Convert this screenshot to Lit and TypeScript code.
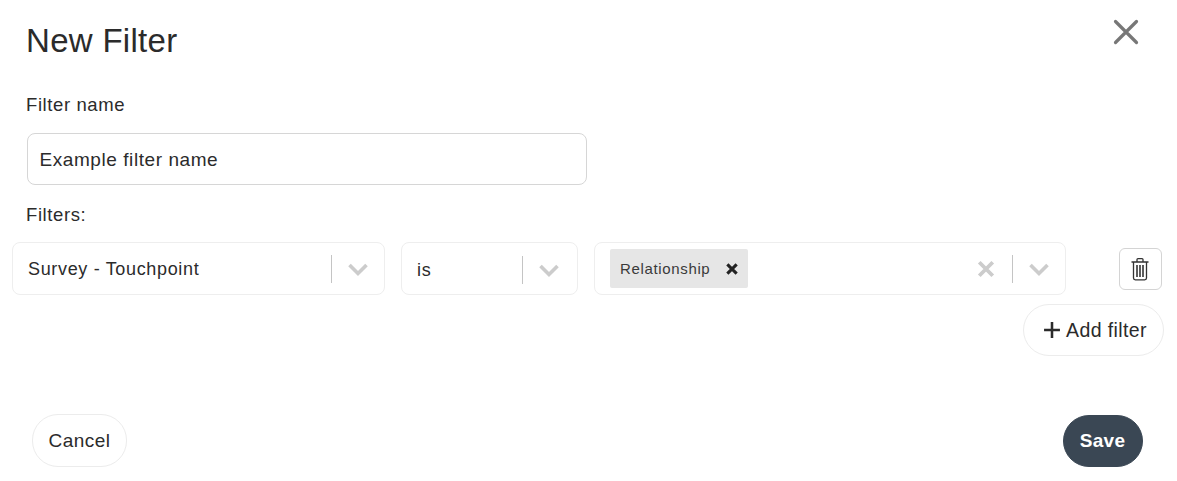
import { LitElement, css, html } from "lit";
import { customElement } from "lit/decorators.js";

const chevron = html`<svg class="chevron" viewBox="0 0 24 24"><path d="M3.5 8 12 16.5 20.500 8" fill="none" stroke="currentColor" stroke-width="3.6" /></svg>`;

@customElement("app-root")
export class AppRoot extends LitElement {
  static styles = css`
    :host {
      display: block;
      width: 1177px;
      height: 481px;
      box-sizing: border-box;
      background: #fff;
      color: #2b2b2b;
      font-family: "Liberation Sans", Arial, sans-serif;
      font-size: 18px;
      letter-spacing: 0.66px;
      overflow: hidden;
    }
    .head {
      display: flex;
      justify-content: space-between;
      padding: 20px 38px 0 26px;
      height: 94px;
      box-sizing: border-box;
    }
    h1 {
      margin: 0;
      font-size: 33px;
      line-height: 41px;
      font-weight: 400;
      letter-spacing: 0.3px;
    }
    .close {
      width: 26px;
      height: 26px;
      margin-top: -1px;
      color: #777;
    }
    .label {
      margin-left: 26px;
      line-height: 22px;
      font-size: 18.500px;
      letter-spacing: 0.6px;
    }
    .name {
      margin: 17px 0 0 27px;
      width: 560px;
      height: 52px;
      box-sizing: border-box;
      border: 1.5px solid #d6d6d6;
      border-radius: 8px;
      padding: 2px 11px 0 11.500px;
      display: flex;
      align-items: center;
      font-size: 19px;
      letter-spacing: 0.57px;
    }
    .filters {
      margin-top: 19px;
    }
    .row {
      display: flex;
      align-items: flex-start;
      margin: 16px 0 0 12px;
    }
    .select {
      height: 53px;
      box-sizing: border-box;
      border: 1.5px solid #eee;
      border-radius: 8px;
      display: flex;
      align-items: center;
      margin-right: 16px;
    }
    .s1 {
      width: 373px;
      padding: 1px 14px 0 15px;
    }
    .s2 {
      width: 177px;
      padding: 3px 16px 0 15px;
    }
    .s3 {
      width: 472px;
      padding: 0 14px 0 15px;
    }
    .value {
      flex: 1;
    }
    .sep {
      width: 1px;
      height: 28px;
      background: #c4c4c4;
      margin: 0 15px 0 0;
    }
    .chevron {
      width: 24px;
      height: 24px;
      color: #ccc;
      margin-left: -1px;
    }
    .tags {
      flex: 1;
      display: flex;
    }
    .tag {
      display: flex;
      align-items: center;
      height: 39px;
      width: 138px;
      box-sizing: border-box;
      padding: 0 9px 0 10px;
      background: #e6e6e6;
      border-radius: 2px;
      font-size: 15px;
      letter-spacing: 0.65px;
      color: #3a3a3a;
      justify-content: space-between;
    }
    .tag svg {
      width: 14px;
      height: 14px;
      color: #222;
    }
    .clear {
      width: 18px;
      height: 18px;
      color: #ccc;
      margin-right: 17px;
    }
    .trash {
      margin: 6px 0 0 37px;
      width: 43px;
      height: 42px;
      box-sizing: border-box;
      border: 1.5px solid #d4d4d4;
      border-radius: 6px;
      background: #fff;
      display: flex;
      align-items: center;
      justify-content: center;
      padding: 0;
    }
    .trash svg {
      width: 20px;
      height: 24px;
      color: #333;
      margin-left: -1px;
    }
    button {
      font: inherit;
      letter-spacing: inherit;
      color: inherit;
    }
    .pill {
      height: 52px;
      box-sizing: border-box;
      border-radius: 26px;
      border: 1.5px solid #ececec;
      background: #fff;
      padding: 0;
      display: flex;
      align-items: center;
      justify-content: center;
    }
    .add-row {
      display: flex;
      justify-content: flex-end;
      padding-right: 13px;
      margin-top: 9px;
    }
    .add {
      width: 141px;
      gap: 5px;
      font-size: 19.500px;
      letter-spacing: 0.4px;
      padding-left: 3px;
    }
    .add svg {
      width: 18px;
      height: 18px;
    }
    .foot {
      display: flex;
      justify-content: space-between;
      align-items: flex-end;
      padding: 0 34px 0 32px;
      margin-top: 58px;
    }
    .cancel {
      width: 95px;
      height: 53px;
      font-size: 19px;
      letter-spacing: 0.5px;
      padding-top: 1px;
    }
    .save {
      width: 80px;
      background: #3a4754;
      border-color: #3a4754;
      color: #fff;
      font-weight: 700;
      font-size: 19px;
      letter-spacing: 0.3px;
      padding: 0 1px 0 0;
    }
  `;

  render() {
    return html`
      <div class="head">
        <h1>New Filter</h1>
        <svg class="close" viewBox="0 0 26 26"><path d="M2.5 2.500l21 21M23.500 2.500l-21 21" stroke="currentColor" stroke-width="3.2" stroke-linecap="round" /></svg>
      </div>
      <div class="label">Filter name</div>
      <div class="name">Example filter name</div>
      <div class="label filters">Filters:</div>
      <div class="row">
        <div class="select s1">
          <span class="value">Survey - Touchpoint</span>
          <span class="sep"></span>${chevron}
        </div>
        <div class="select s2">
          <span class="value">is</span>
          <span class="sep"></span>${chevron}
        </div>
        <div class="select s3">
          <div class="tags">
            <span class="tag">Relationship
              <svg viewBox="0 0 12 12"><path d="M2 2l8 8M10 2l-8 8" stroke="currentColor" stroke-width="2.6" /></svg>
            </span>
          </div>
          <svg class="clear" viewBox="0 0 16 16"><path d="M2 2l12 12M14 2L2 14" stroke="currentColor" stroke-width="3.4" /></svg>
          <span class="sep"></span>${chevron}
        </div>
        <button class="trash" aria-label="Delete">
          <svg viewBox="0 0 20 24" fill="none" stroke="currentColor" stroke-width="1.3">
            <path d="M1.500 5h17M7 5V2.600q0-1 1-1h4q1 0 1 1V5" />
            <path d="M3.500 5v16q0 1.800 1.800 1.800h9.400q1.800 0 1.800-1.800V5" />
            <path d="M7 8v12M10 8v12M13 8v12" stroke-width="1.6" />
          </svg>
        </button>
      </div>
      <div class="add-row">
        <button class="pill add">
          <svg viewBox="0 0 17 17"><path d="M8.500 1v15M1 8.500h15" stroke="currentColor" stroke-width="2.4" /></svg>
          Add filter
        </button>
      </div>
      <div class="foot">
        <button class="pill cancel">Cancel</button>
        <button class="pill save">Save</button>
      </div>
    `;
  }
}
